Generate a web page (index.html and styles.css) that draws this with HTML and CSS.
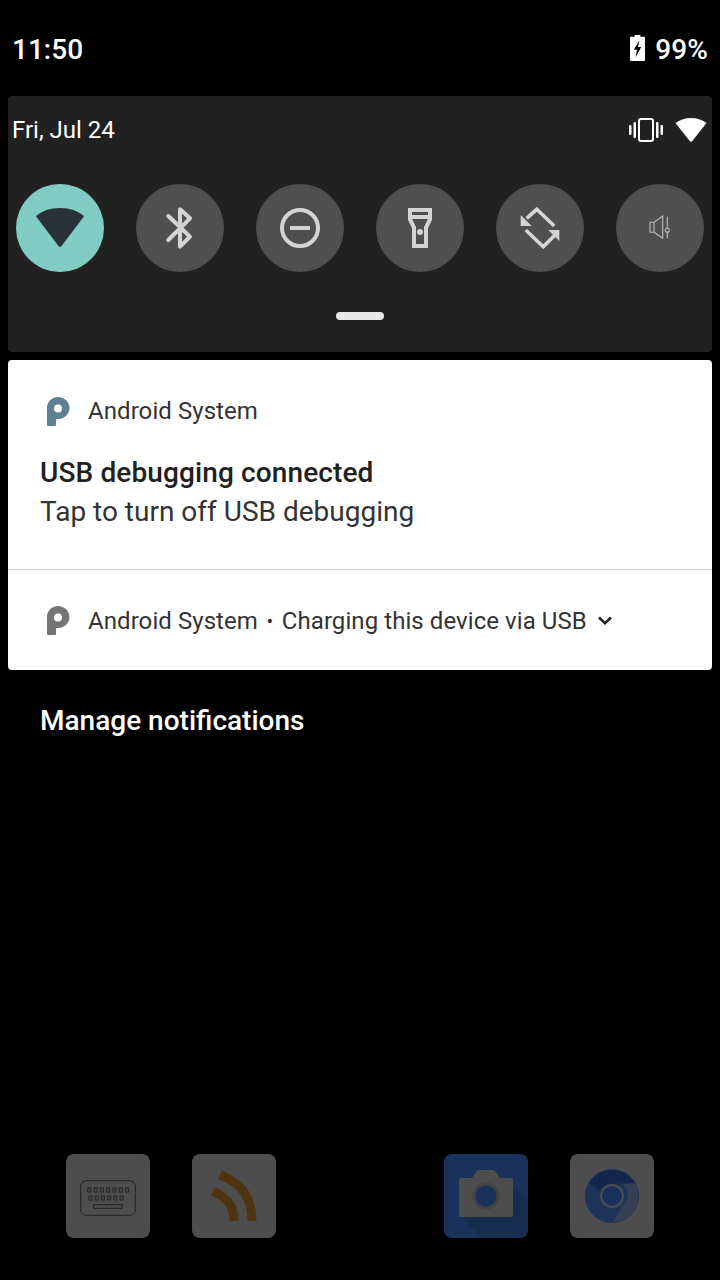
FILE: index.html
```html
<!DOCTYPE html>
<html lang="en">
<head>
<meta charset="utf-8">
<title>Notification shade</title>
<link rel="stylesheet" href="styles.css">
</head>
<body>
<div class="screen">
  <header class="status">
    <span class="time">11:50</span>
    <div class="battery">
      <svg class="batt-icon" width="15" height="26" viewBox="0 0 16 28" preserveAspectRatio="none"><path fill="#fff" fill-rule="evenodd" d="M5 0h6v2h4a1 1 0 0 1 1 1v24a1 1 0 0 1-1 1H1a1 1 0 0 1-1-1V3a1 1 0 0 1 1-1h4zM10 6 4 16h3.500L6 24l6-11H8.500z"/></svg>
      <span class="pct">99%</span>
    </div>
  </header>

  <section class="qs">
    <div class="qs-top">
      <span class="date">Fri, Jul 24</span>
      <div class="qs-status">
        <svg width="34" height="24" viewBox="0 0 34 24"><g fill="none" stroke="#fff" stroke-width="2"><rect x="10" y="1" width="14" height="22" rx="2"/></g><g fill="#fff"><rect x="0" y="7" width="2.500" height="10" rx="1"/><rect x="4.500" y="4" width="2.500" height="16" rx="1"/><rect x="27" y="4" width="2.500" height="16" rx="1"/><rect x="31.500" y="7" width="2.500" height="10" rx="1"/></g></svg>
        <svg width="32" height="24" viewBox="0 0 32 24"><path fill="#fff" d="M16 0C9.500 0 4.500 2 0.500 5L14.700 23a1.700 1.700 0 0 0 2.600 0L31.500 5C27.500 2 22.500 0 16 0z"/></svg>
      </div>
    </div>
    <div class="tiles">
      <div class="tile tile-on">
        <svg width="48" height="40" viewBox="0 0 48 40"><path fill="#263238" d="M24 0C14 0 6 3 .7 7.500c-.5.400-.6 1-.2 1.500L22.500 38a2 2 0 0 0 3 0L47.500 9c.4-.5.3-1.100-.2-1.500C42 3 34 0 24 0z"/></svg>
      </div>
      <div class="tile">
        <svg width="48" height="48" viewBox="0 0 48 48"><path fill="none" stroke="#d4d4d4" stroke-width="4" stroke-linecap="round" stroke-linejoin="round" d="M12.300 12 34 32.700 24 42.700V5.300l10 9L12.300 36"/></svg>
      </div>
      <div class="tile">
        <svg width="48" height="48" viewBox="0 0 48 48"><circle cx="24" cy="24" r="18" fill="none" stroke="#d4d4d4" stroke-width="4"/><rect x="14" y="22" width="20" height="4" fill="#d4d4d4"/></svg>
      </div>
      <div class="tile">
        <svg width="48" height="48" viewBox="0 0 48 48"><path fill="#d4d4d4" fill-rule="evenodd" d="M12 4h24v12l-4 8v20H16V24l-4-8zM16 8v3h16V8zM16 15l4 8v17h8V23l4-8z"/><circle cx="24" cy="28" r="3" fill="#d4d4d4"/></svg>
      </div>
      <div class="tile">
        <svg width="48" height="48" viewBox="0 0 48 48"><g fill="none" stroke="#d4d4d4" stroke-width="3.600"><path d="M10.700 14.300 20.700 5.300 38.300 22"/><path d="M9.700 26 27.300 42.700 40.700 29.300"/></g><path fill="#d4d4d4" d="M4.700 11v11h11zM43.300 37V26h-11z"/></svg>
      </div>
      <div class="tile">
        <svg width="48" height="48" viewBox="0 0 48 48"><g fill="none" stroke="#bdbdbd" stroke-width="1.100"><path d="M14 18.300h4v10h-4zM18 18.300 26.700 12v22.300L18 28.300"/><path d="M31.300 12.700v11.600M31.300 28.300v6"/><circle cx="31.300" cy="26.300" r="2"/></g></svg>
      </div>
    </div>
    <div class="handle"></div>
  </section>

  <section class="card">
    <div class="notif">
      <div class="notif-head">
        <svg class="app-icon" width="24" height="30" viewBox="0 0 24 30"><path fill="#5f8090" fill-rule="evenodd" d="M12 1c6.500 0 11.500 5 11.500 11S18.500 23 12 23h-2v6a1 1 0 0 1-1 1H2a1 1 0 0 1-1-1V12C1 6 5.500 1 12 1zm0 7.500a4 4 0 1 0 0 8 4 4 0 0 0 0-8z"/></svg>
        <span class="app-name">Android System</span>
      </div>
      <div class="notif-title">USB debugging connected</div>
      <div class="notif-text">Tap to turn off USB debugging</div>
    </div>
    <div class="notif-row">
      <svg class="app-icon" width="24" height="30" viewBox="0 0 24 30"><path fill="#757575" fill-rule="evenodd" d="M12 1c6.500 0 11.500 5 11.500 11S18.500 23 12 23h-2v6a1 1 0 0 1-1 1H2a1 1 0 0 1-1-1V12C1 6 5.500 1 12 1zm0 7.500a4 4 0 1 0 0 8 4 4 0 0 0 0-8z"/></svg>
      <span class="app-name">Android System</span>
      <span class="app-name dot">•</span>
      <span class="app-name">Charging this device via USB</span>
      <svg class="chev" width="14" height="9" viewBox="0 0 14 9"><path fill="none" stroke="#212121" stroke-width="2.600" d="M1 1.500 7 7.200l6-5.700"/></svg>
    </div>
  </section>

  <div class="manage">Manage notifications</div>

  <div class="dock">
    <div class="dock-group">
      <div class="app">
        <svg width="60" height="40" viewBox="0 0 60 40"><g fill="none" stroke="#2a2a2a" stroke-width="1.200"><rect x="2.600" y="4.600" width="54.800" height="34.800" rx="6"/><rect x="15.600" y="28.600" width="28.800" height="3.800"/><rect x="9.800" y="12" width="3" height="4"/><rect x="16.100" y="12" width="3" height="4"/><rect x="22.400" y="12" width="3" height="4"/><rect x="28.700" y="12" width="3" height="4"/><rect x="35" y="12" width="3" height="4"/><rect x="41.300" y="12" width="3" height="4"/><rect x="47.600" y="12" width="3" height="4"/><rect x="11" y="20" width="3" height="4"/><rect x="17.200" y="20" width="3" height="4"/><rect x="23.400" y="20" width="3" height="4"/><rect x="29.600" y="20" width="3" height="4"/><rect x="35.800" y="20" width="3" height="4"/><rect x="42" y="20" width="3" height="4"/></g></svg>
      </div>
      <div class="app">
        <svg class="app-art" width="84" height="84" viewBox="0 0 84 84"><g fill="none" stroke="#4f3413" stroke-width="9"><path d="M28 21C50 29 60 44 60 67"/><path d="M21 37C33 43 42 50 42 67" /></g></svg>
      </div>
    </div>
    <div class="dock-group">
      <div class="app app-cam">
        <svg width="84" height="84" viewBox="0 0 84 84"><path fill="#16294a" d="M17 63 63 26l21 21v37H38z" opacity=".6"/><path fill="#4d4d4d" d="M17 24h11l5-7a2 2 0 0 1 1.500-1h15a2 2 0 0 1 1.500 1l5 7h11a2 2 0 0 1 2 2v35a2 2 0 0 1-2 2H17a2 2 0 0 1-2-2V26a2 2 0 0 1 2-2z"/><circle cx="42" cy="42" r="13.500" fill="#434343"/><circle cx="42" cy="42" r="10.500" fill="#1a3159"/></svg>
      </div>
      <div class="app">
        <svg width="84" height="84" viewBox="0 0 84 84"><circle cx="42" cy="42" r="27" fill="#1d3358"/><path fill="#14264e" d="M19 29a27 27 0 0 1 46 0l-1 .600H42a13 13 0 0 0-12 7z"/><path fill="#343f55" d="M65 29a27 27 0 0 1-23 40l12-19a13 13 0 0 0-2-20z"/><circle cx="42" cy="42" r="12" fill="#4d4d4d"/><circle cx="42" cy="42" r="10" fill="#1a3159"/></svg>
      </div>
    </div>
  </div>
</div>
</body>
</html>
```

FILE: styles.css
```css
* { box-sizing: border-box; }
html, body { margin: 0; padding: 0; background: #000; }
body { font-family: Roboto, "Noto Sans", sans-serif; }
.screen { width: 720px; height: 1280px; display: flex; flex-direction: column; overflow: hidden; background: #000; }

.status { height: 96px; padding: 2px 12px 0; display: flex; justify-content: space-between; align-items: center; color: #fff; }
.time { font-size: 28px; font-weight: 500; }
.battery { display: flex; align-items: center; gap: 10px; }
.batt-icon { margin-top: -2px; }
.pct { font-size: 28px; font-weight: 500; letter-spacing: .1px; }

.qs { margin: 0 8px; height: 256px; background: #212121; border-radius: 4px; display: flex; flex-direction: column; }
.qs-top { height: 88px; padding: 0 5px 20px 4px; display: flex; justify-content: space-between; align-items: center; }
.date { color: #fff; font-size: 24px; }
.qs-status { display: flex; align-items: center; gap: 12px; }
.tiles { display: flex; gap: 32px; padding-left: 8px; }
.tile { width: 88px; height: 88px; border-radius: 50%; background: #4f4f4f; display: flex; align-items: center; justify-content: center; flex: none; }
.tile-on { background: #80cbc4; }
.handle { width: 48px; height: 8px; border-radius: 4px; background: #e6e6e6; margin: 40px auto 0; }

.card { margin: 8px 8px 0; height: 310px; background: #fff; border-radius: 4px; display: flex; flex-direction: column; color: #212121; }
.notif { height: 210px; padding: 34px 32px 0; border-bottom: 1px solid #cfcfcf; }
.notif-head { display: flex; align-items: center; gap: 18px; height: 34px; }
.app-icon { margin-left: 6px; flex: none; }
.app-name { font-size: 24px; line-height: 34px; color: #333; letter-spacing: .07px; }
.notif-title { margin-top: 26px; font-size: 28px; font-weight: 500; line-height: 37px; letter-spacing: .12px; }
.notif-text { padding-top: 1px; font-size: 28px; line-height: 40px; color: #333; }
.notif-row { flex: 1; padding: 0 32px; display: flex; align-items: center; }
.notif-row .app-icon { margin-right: 18px; }
.notif-row .app-name { padding-top: 2px; }
.dot { margin: 0 8.500px; font-size: 20px; }
.chev { margin-left: 11px; }

.manage { margin: 33px 0 0 40px; color: #fff; font-size: 28px; font-weight: 500; line-height: 36px; }

.dock { margin-top: auto; margin-bottom: 42px; padding-left: 66px; display: flex; gap: 168px; }
.dock-group { display: flex; gap: 42px; }
.app { width: 84px; height: 84px; border-radius: 8px; background: #4d4d4d; display: flex; align-items: center; justify-content: center; overflow: hidden; }
.app-cam { background: #1a3159; }
```
